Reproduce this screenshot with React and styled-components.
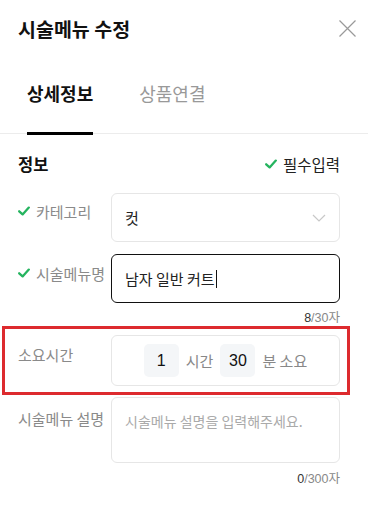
import React from "react";
import styled, { createGlobalStyle } from "styled-components";

const GlobalStyle = createGlobalStyle`
  html, body { margin: 0; padding: 0; background: #fff; }
  body {
    font-family: "Noto Sans CJK KR", "Noto Sans", "Liberation Sans", sans-serif;
    color: #222;
    overflow: hidden;
  }
`;

const Page = styled.div`
  width: 368px;
  height: 512px;
  background: #fff;
`;

const Header = styled.div`
  height: 56px;
  padding: 0 12px 0 18px;
  display: flex;
  align-items: center;
  justify-content: space-between;
`;

const Title = styled.h1`
  margin: 0;
  font-size: 19.5px;
  font-weight: 700;
  color: #111;
`;

const CloseButton = styled.button`
  border: 0;
  background: none;
  padding: 0;
  width: 18px;
  height: 18px;
  display: flex;
  align-items: center;
  justify-content: center;
`;

const TabBar = styled.div`
  display: flex;
  gap: 46px;
  padding: 0 27px;
  border-bottom: 1px solid #ececec;
`;

const Tab = styled.div`
  padding: 25px 0 27px;
  font-size: 18px;
  line-height: 24px;
  font-weight: ${(p) => (p.$active ? 700 : 400)};
  color: ${(p) => (p.$active ? "#111" : "#999")};
  border-bottom: 3px solid ${(p) => (p.$active ? "#000" : "transparent")};
  margin-bottom: -2px;
`;

const Section = styled.div`
  padding: 19px 28px 0 18px;
`;

const SectionHead = styled.div`
  display: flex;
  align-items: center;
  justify-content: space-between;
  height: 22px;
  margin-bottom: 18px;
`;

const SectionTitle = styled.h2`
  margin: 0;
  font-size: 16.5px;
  font-weight: 700;
  color: #111;
`;

const Required = styled.div`
  display: flex;
  align-items: center;
  gap: 6px;
  font-size: 15.5px;
  color: #222;
`;

const Row = styled.div`
  position: relative;
  display: grid;
  grid-template-columns: 93px 1fr;
  margin-top: ${(p) => p.$gap || 0}px;
`;

const Highlight = styled.div`
  position: absolute;
  top: -9px;
  left: -16px;
  right: -10px;
  bottom: -9px;
  border: 3px solid #dd2a2e;
  pointer-events: none;
`;

const Label = styled.div`
  display: flex;
  align-items: center;
  gap: 6px;
  padding-top: ${(p) => p.$top || 8}px;
  height: 20px;
  font-size: 15px;
  color: #8a8a8a;
  white-space: nowrap;
`;

const Field = styled.div`
  height: ${(p) => p.$h || 49}px;
  box-sizing: border-box;
  border: 1px solid ${(p) => (p.$focus ? "#111" : "#e6e6e6")};
  border-radius: 6px;
  display: flex;
  align-items: ${(p) => (p.$top ? "flex-start" : "center")};
  justify-content: ${(p) => (p.$center ? "center" : "space-between")};
  padding: ${(p) => (p.$top ? "13px 13px" : "0 13px")};
  font-size: 15px;
  color: #222;
`;

const Caret = styled.span`
  display: inline-block;
  width: 1px;
  height: 18px;
  background: #111;
  margin-left: 1px;
  vertical-align: -3px;
`;

const Placeholder = styled.span`
  color: #aaa;
  font-size: 14px;
`;

const Counter = styled.div`
  text-align: right;
  font-size: 12.5px;
  line-height: 16px;
  color: #888;
  margin-top: ${(p) => p.$gap || 7}px;
  font-family: "Liberation Sans", "Noto Sans CJK KR", sans-serif;

  b {
    font-weight: 400;
    color: #333;
  }
`;

const TimeGroup = styled.div`
  display: flex;
  align-items: center;
  gap: 7px;
`;

const NumBox = styled.div`
  width: 35px;
  height: 33px;
  border-radius: 5px;
  background: #f4f6f8;
  display: flex;
  align-items: center;
  justify-content: center;
  font-family: "Liberation Sans", sans-serif;
  font-size: 16px;
  color: #111;
`;

const Unit = styled.span`
  font-size: 15px;
  color: #888;
`;

const Check = () => (
  <svg width="12" height="12" viewBox="0 0 12 12" fill="none">
    <path d="M1.2 6.3 L4.6 9.4 L10.8 2.6" stroke="#25b45f" strokeWidth="2.3" strokeLinecap="round" strokeLinejoin="round" />
  </svg>
);

const Chevron = () => (
  <svg width="14" height="8" viewBox="0 0 14 8" fill="none">
    <path d="M1 1 L7 7 L13 1" stroke="#c8c8c8" strokeWidth="1.2" />
  </svg>
);

const CloseIcon = () => (
  <svg width="17" height="17" viewBox="0 0 17 17" fill="none">
    <path d="M0.5 0.5 L16.5 16.5 M16.5 0.5 L0.5 16.5" stroke="#9a9a9a" strokeWidth="1.2" />
  </svg>
);

export default function App() {
  return (
    <Page>
      <GlobalStyle />
      <Header>
        <Title>시술메뉴 수정</Title>
        <CloseButton aria-label="닫기">
          <CloseIcon />
        </CloseButton>
      </Header>

      <TabBar>
        <Tab $active>상세정보</Tab>
        <Tab>상품연결</Tab>
      </TabBar>

      <Section>
        <SectionHead>
          <SectionTitle>정보</SectionTitle>
          <Required>
            <Check />
            필수입력
          </Required>
        </SectionHead>

        <Row>
          <Label>
            <Check />
            카테고리
          </Label>
          <Field>
            <span>컷</span>
            <Chevron />
          </Field>
        </Row>

        <Row $gap={12}>
          <Label $top={9}>
            <Check />
            시술메뉴명
          </Label>
          <Field $focus>
            <span>
              남자 일반 커트
              <Caret />
            </span>
          </Field>
        </Row>
        <Counter>
          <b>8</b>/30자
        </Counter>

        <Row $gap={9}>
          <Highlight />
          <Label $top={9}>소요시간</Label>
          <Field $h={51} $center>
            <TimeGroup>
              <NumBox>1</NumBox>
              <Unit>시간</Unit>
              <NumBox>30</NumBox>
              <Unit>분 소요</Unit>
            </TimeGroup>
          </Field>
        </Row>

        <Row $gap={11}>
          <Label $top={11}>시술메뉴 설명</Label>
          <Field $h={66} $top>
            <Placeholder>시술메뉴 설명을 입력해주세요.</Placeholder>
          </Field>
        </Row>
        <Counter $gap={8}>
          <b>0</b>/300자
        </Counter>
      </Section>
    </Page>
  );
}
